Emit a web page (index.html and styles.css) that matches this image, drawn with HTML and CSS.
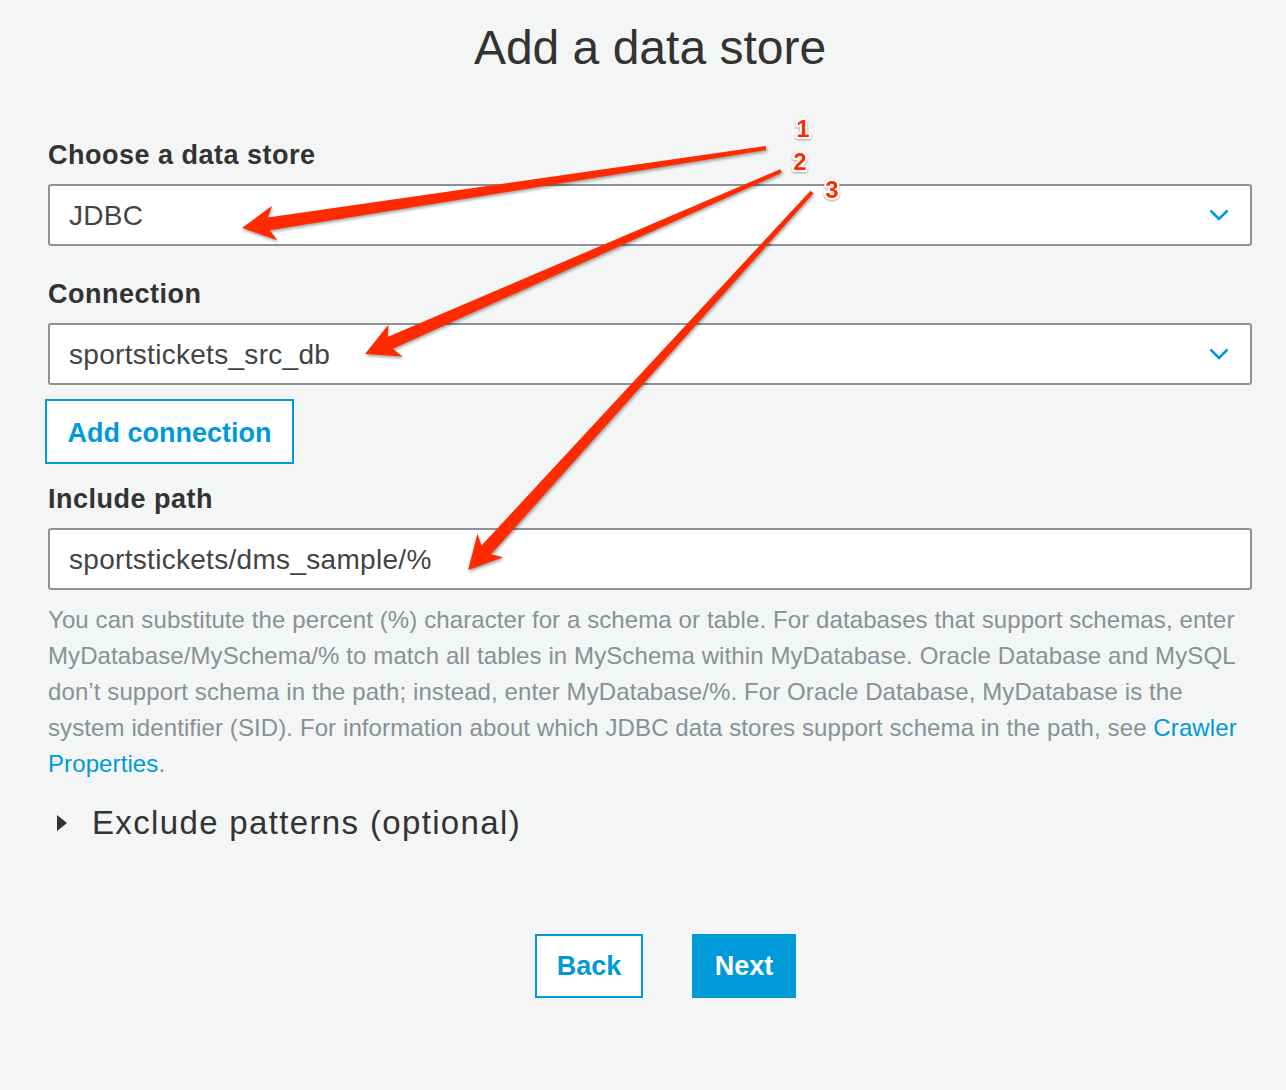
FILE: index.html
```html
<!DOCTYPE html>
<html lang="en">
<head>
<meta charset="utf-8">
<title>Add a data store</title>
<link rel="stylesheet" href="styles.css">
</head>
<body>
<main class="page">
  <h1 class="title">Add a data store</h1>

  <div class="field field-first">
    <div class="label">Choose a data store</div>
    <div class="select">
      <span class="value">JDBC</span>
      <svg class="chevron" width="20" height="12" viewBox="0 0 20 12"><path d="M1.5 1.5 L10 10 L18.5 1.5" fill="none" stroke="#009ad8" stroke-width="2.6"/></svg>
    </div>
  </div>

  <div class="field field-second">
    <div class="label">Connection</div>
    <div class="select">
      <span class="value">sportstickets_src_db</span>
      <svg class="chevron" width="20" height="12" viewBox="0 0 20 12"><path d="M1.5 1.5 L10 10 L18.5 1.5" fill="none" stroke="#009ad8" stroke-width="2.6"/></svg>
    </div>
    <button class="btn btn-outline btn-add">Add connection</button>
  </div>

  <div class="field field-third">
    <div class="label">Include path</div>
    <div class="select input">
      <span class="value">sportstickets/dms_sample/%</span>
    </div>
    <p class="help">You can substitute the percent (%) character for a schema or table. For databases that support schemas, enter MyDatabase/MySchema/% to match all tables in MySchema within MyDatabase. Oracle Database and MySQL don’t support schema in the path; instead, enter MyDatabase/%. For Oracle Database, MyDatabase is the system identifier (SID). For information about which JDBC data stores support schema in the path, see <a class="link" href="#">Crawler Properties</a>.</p>
  </div>

  <div class="expander">
    <span class="caret"></span>
    <span class="expander-text">Exclude patterns (optional)</span>
  </div>

  <div class="footer">
    <button class="btn btn-outline btn-back">Back</button>
    <button class="btn btn-primary btn-next">Next</button>
  </div>
</main>

<svg class="annotations" width="1286" height="1090" viewBox="0 0 1286 1090">
  <g class="arrows" fill="#ff2a00">
    <polygon transform="translate(766 148) rotate(171.32)" points="0,-2 503,-6.5 497,-17.5 530,0 497,17.5 503,6.5 0,2"/>
    <polygon transform="translate(781 171) rotate(156.26)" points="0,-2 427,-6.5 421,-17.5 454.5,0 421,17.5 427,6.5 0,2"/>
    <polygon transform="translate(812 192) rotate(132.30)" points="0,-2 484,-6.5 478,-17.5 511,0 478,17.5 484,6.5 0,2"/>
  </g>
  <g class="nums" font-family="Liberation Sans, Arial, sans-serif" font-weight="bold" font-size="24" fill="#ff2a00" stroke="#ffffff" stroke-width="4" paint-order="stroke" stroke-linejoin="round" text-anchor="middle">
    <text x="803" y="137">1</text>
    <text x="800" y="170">2</text>
    <text x="832" y="198">3</text>
  </g>
</svg>
</body>
</html>
```

FILE: styles.css
```css
html, body {
  margin: 0;
  padding: 0;
}
body {
  background: #f4f6f5;
  font-family: "Liberation Sans", Arial, Helvetica, sans-serif;
  color: #333;
  width: 1286px;
  height: 1090px;
  overflow: hidden;
  position: relative;
}
.page {
  width: 1204px;
  margin-left: 48px;
  padding-top: 20px;
}
.title {
  margin: 0;
  font-size: 48px;
  line-height: 56px;
  font-weight: normal;
  text-align: center;
  color: #333;
}
.field {
  display: flex;
  flex-direction: column;
  align-items: stretch;
}
.field-first { margin-top: 62px; }
.field-second { margin-top: 31px; }
.field-third { margin-top: 18px; }
.label {
  font-size: 27px;
  font-weight: bold;
  letter-spacing: 0.5px;
  line-height: 34px;
  margin-bottom: 12px;
  color: #333;
}
.select {
  box-sizing: border-box;
  height: 62px;
  border: 2px solid #8b9398;
  border-radius: 3px;
  background: #fff;
  display: flex;
  align-items: center;
  justify-content: space-between;
  padding: 2px 21px 0 19px;
}
.value {
  font-size: 28px;
  letter-spacing: 0.3px;
  line-height: 32px;
  color: #444;
}
.chevron {
  display: block;
  margin-top: -2px;
}
.btn {
  font-family: "Liberation Sans", Arial, Helvetica, sans-serif;
  font-weight: bold;
  font-size: 27px;
  box-sizing: border-box;
  border: 2px solid #009ad8;
  border-radius: 0;
  padding: 0;
  cursor: pointer;
}
.btn-outline {
  background: #fff;
  color: #009ad8;
}
.btn-primary {
  background: #009ad8;
  color: #fff;
}
.btn-add {
  align-self: flex-start;
  margin-top: 14px;
  margin-left: -3px;
  width: 249px;
  height: 65px;
  padding-top: 3px;
}
.help {
  margin: 12px 0 0;
  font-size: 24px;
  letter-spacing: 0.1px;
  line-height: 36px;
  color: #879196;
  max-width: 1196px;
}
.link {
  color: #009ad8;
  text-decoration: none;
}
.expander {
  margin-top: 21px;
  display: flex;
  align-items: center;
  height: 40px;
}
.caret {
  width: 0;
  height: 0;
  border-top: 8px solid transparent;
  border-bottom: 8px solid transparent;
  border-left: 10px solid #333;
  margin-left: 9px;
  margin-right: 25px;
}
.expander-text {
  font-size: 33px;
  letter-spacing: 1.35px;
  line-height: 40px;
  color: #333;
}
.footer {
  margin-top: 91px;
  display: flex;
  justify-content: center;
  gap: 49px;
  padding-left: 31px;
}
.btn-back {
  width: 108px;
  height: 64px;
}
.btn-next {
  width: 104px;
  height: 64px;
}
.annotations {
  position: absolute;
  left: 0;
  top: 0;
  pointer-events: none;
}
.arrows {
  filter: drop-shadow(1px 2px 1.5px rgba(0, 0, 0, 0.35));
}
.nums {
  filter: drop-shadow(0.5px 1px 1px rgba(0, 0, 0, 0.35));
}
```
